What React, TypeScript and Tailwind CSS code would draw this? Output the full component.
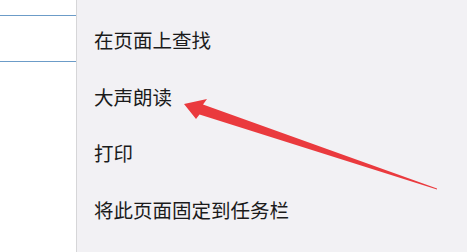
import React from "react";

const items = ["在页面上查找", "大声朗读", "打印", "将此页面固定到任务栏"];

export default function App() {
  return (
    <div
      className="relative flex h-[252px] w-[467px] overflow-hidden bg-[#f2f1f4]"
      style={{ fontFamily: '"Noto Sans CJK SC", "Microsoft YaHei", sans-serif' }}
    >
      <div className="flex h-full w-[77px] flex-col border-r border-[#d6d6d8] bg-white">
        <div className="mt-[15px] h-px w-full bg-[#6c9cc8]" />
        <div className="mt-[45px] h-px w-full bg-[#6c9cc8]" />
      </div>
      <div className="flex flex-col pl-[17px] pt-[26px]">
        {items.map((t) => (
          <div
            key={t}
            className="flex h-[58px] items-start text-[19.5px] leading-[28px] text-[#1b1b1b]"
          >
            {t}
          </div>
        ))}
      </div>
      <svg
        className="pointer-events-none absolute left-0 top-0"
        width="467"
        height="252"
        viewBox="0 0 467 252"
      >
        <polygon
          points="184,104 207,99 203,104.5 437,188.5 437,189.6 199.5,114.5 196,119"
          fill="#ea3a3e"
        />
      </svg>
    </div>
  );
}
